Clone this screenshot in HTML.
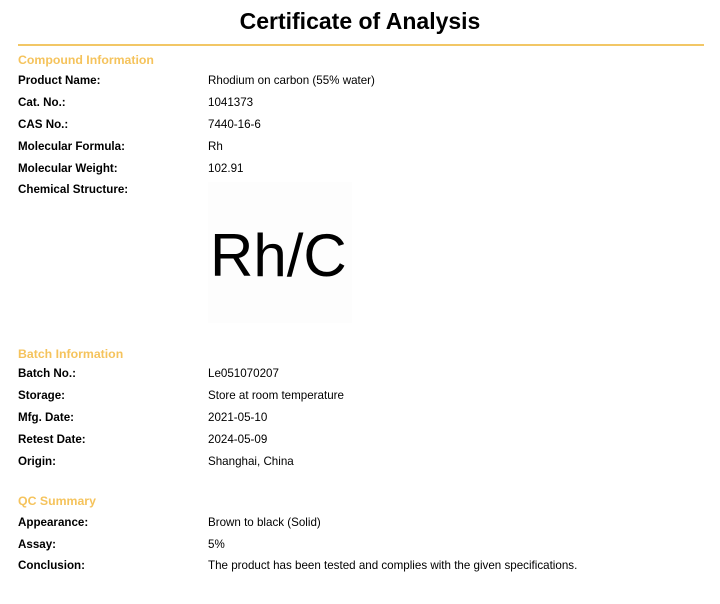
<!DOCTYPE html>
<html><head><style>
body{margin:0;background:#fff;font-family:"Liberation Sans",Arial,sans-serif;color:#000;width:720px;height:604px;position:relative;overflow:hidden}
.t{position:absolute;left:0;width:720px;text-align:center;top:8px;font-size:23px;font-weight:bold}
.hr{position:absolute;left:18px;width:686px;top:44px;height:2px;background:#f2c766}
.h{position:absolute;left:18px;font-size:12.3px;font-weight:bold;color:#f5c35c}
.l{position:absolute;left:18px;font-size:11.6px;font-weight:bold}
.v{position:absolute;left:208px;font-size:11.6px}
.img{position:absolute;left:208px;top:182px;width:144px;height:141px;background:#fdfdfd}
.rh{position:absolute;left:210px;top:222px;font-size:60px;line-height:68px}
</style></head><body>
<div class="t">Certificate of Analysis</div>
<div class="hr"></div>
<div class="h" style="top:53px">Compound Information</div>
<div class="l" style="top:74px">Product Name:</div><div class="v" style="top:74px">Rhodium on carbon (55% water)</div>
<div class="l" style="top:96px">Cat. No.:</div><div class="v" style="top:96px">1041373</div>
<div class="l" style="top:118px">CAS No.:</div><div class="v" style="top:118px">7440-16-6</div>
<div class="l" style="top:140px">Molecular Formula:</div><div class="v" style="top:140px">Rh</div>
<div class="l" style="top:162px">Molecular Weight:</div><div class="v" style="top:162px">102.91</div>
<div class="l" style="top:183px">Chemical Structure:</div>
<div class="img"></div><div class="rh">Rh/C</div>
<div class="h" style="top:347px">Batch Information</div>
<div class="l" style="top:367px">Batch No.:</div><div class="v" style="top:367px">Le051070207</div>
<div class="l" style="top:389px">Storage:</div><div class="v" style="top:389px">Store at room temperature</div>
<div class="l" style="top:411px">Mfg. Date:</div><div class="v" style="top:411px">2021-05-10</div>
<div class="l" style="top:433px">Retest Date:</div><div class="v" style="top:433px">2024-05-09</div>
<div class="l" style="top:455px">Origin:</div><div class="v" style="top:455px">Shanghai, China</div>
<div class="h" style="top:494px">QC Summary</div>
<div class="l" style="top:516px">Appearance:</div><div class="v" style="top:516px">Brown to black (Solid)</div>
<div class="l" style="top:538px">Assay:</div><div class="v" style="top:538px">5%</div>
<div class="l" style="top:559px">Conclusion:</div><div class="v" style="top:559px">The product has been tested and complies with the given specifications.</div>
</body></html>
